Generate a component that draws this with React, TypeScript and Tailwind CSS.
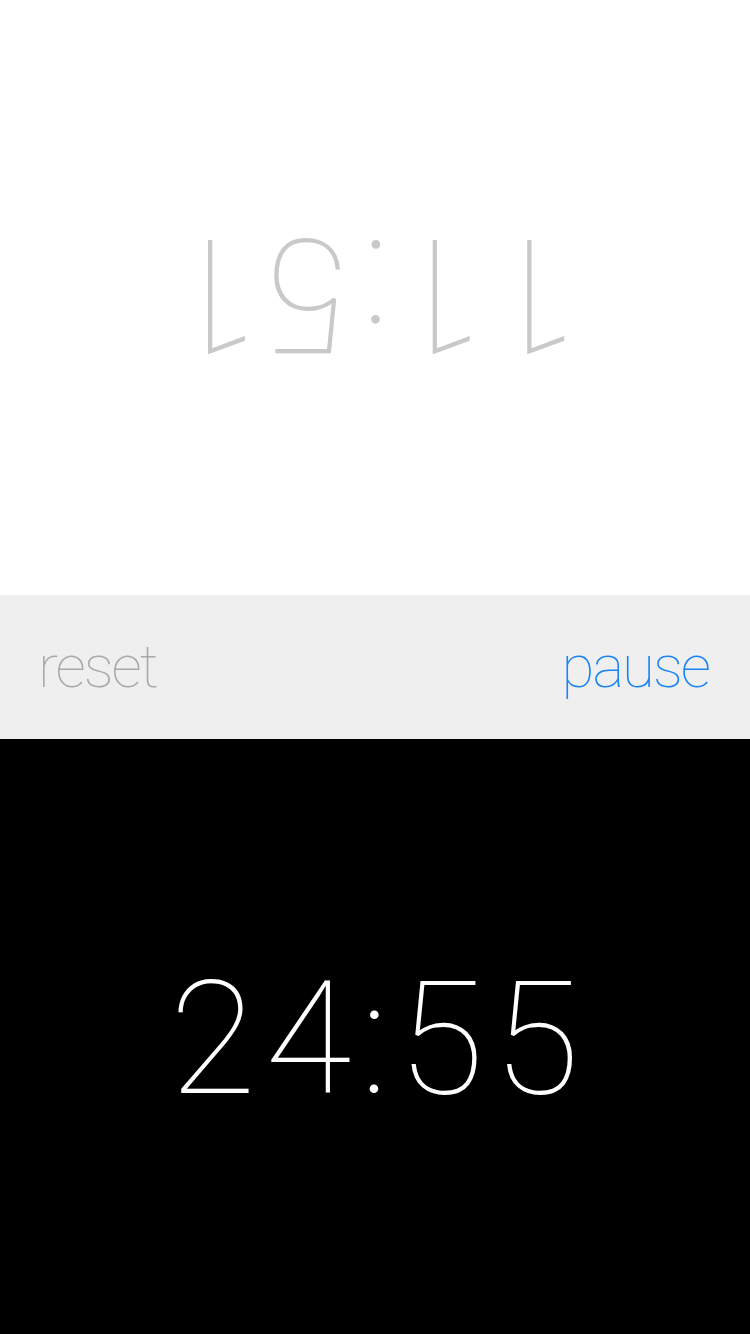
import React from "react";

function App() {
  const font = { fontFamily: "Roboto, 'Liberation Sans', sans-serif" };

  return (
    <div className="flex h-[1334px] w-[750px] flex-col" style={font}>
      {/* opponent's clock, upside down */}
      <div className="flex flex-1 items-center justify-center bg-white">
        <span className="mb-[8px] rotate-180 pl-[7px] text-[160px] font-thin leading-none tracking-[7px] text-[#c9c9c9]">
          11:51
        </span>
      </div>

      <div className="flex h-[144px] items-center justify-between bg-[#efefef] pl-[38px] pr-[41px]">
        <button className="text-[60px] font-thin leading-none tracking-[-2px] text-[#a9a9a9]">
          reset
        </button>
        <button className="text-[60px] font-thin leading-none tracking-[-2px] text-[#1a84f2]">
          pause
        </button>
      </div>

      <div className="flex flex-1 items-center justify-center bg-black">
        <span className="mt-[4px] pl-[8px] text-[158px] font-thin leading-none tracking-[9px] text-white">
          24:55
        </span>
      </div>
    </div>
  );
}

export default App;
